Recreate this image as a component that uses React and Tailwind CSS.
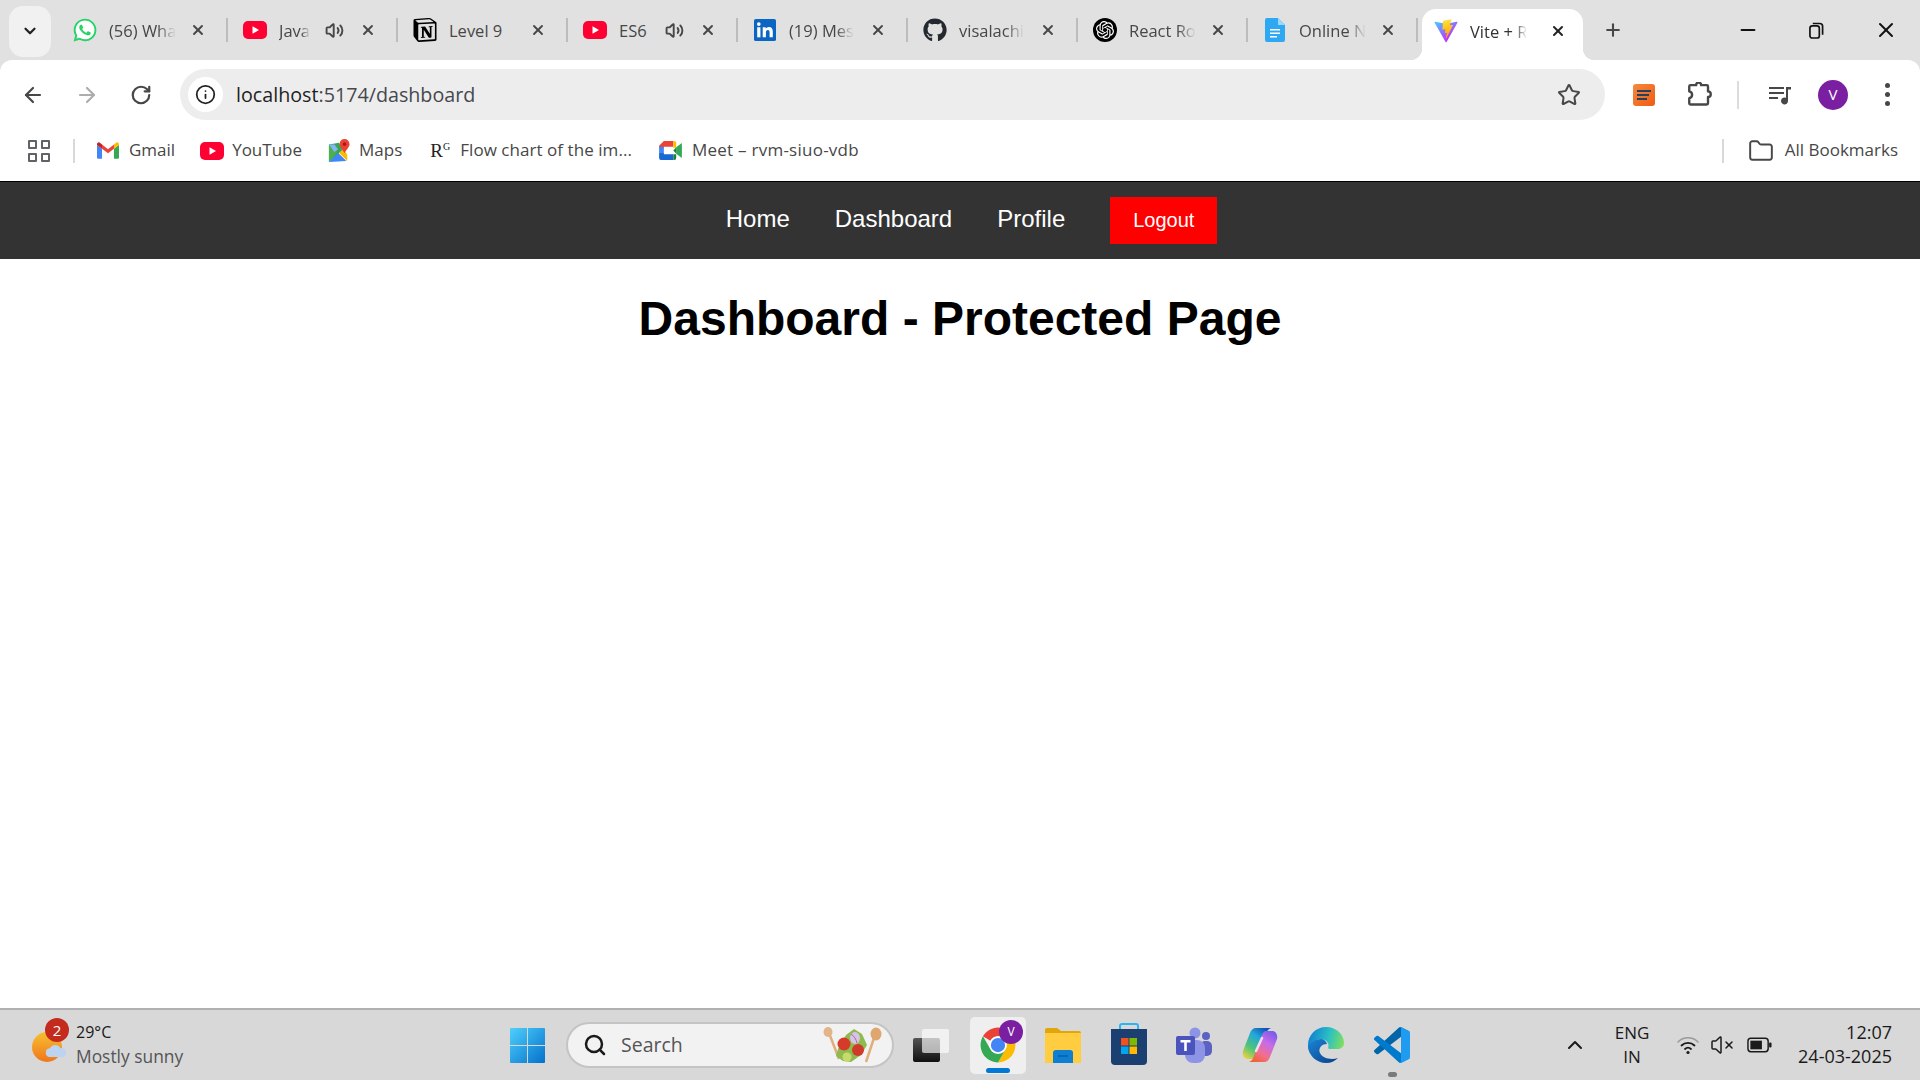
import React from 'react'
import { ArrowLeft, ArrowRight, RotateCw, Star, Plus, X, Minus, ChevronDown, ChevronUp, Search, Folder, Volume2, VolumeX, Info } from 'lucide-react'
import { FaWhatsapp, FaGithub } from 'react-icons/fa'
import { SiNotion, SiOpenai } from 'react-icons/si'

const ui = "font-['Open_Sans',sans-serif]"

const YouTubeIcon = ({ className = 'w-6 h-[18px]' }) => (
    <svg viewBox="0 0 24 18" className={className}>
        <rect width="24" height="18" rx="5" fill="#ff0033" />
        <path d="M9.5 5.2 16 9l-6.500 3.800z" fill="#fff" />
    </svg>
)

const LinkedinIcon = () => (
    <svg viewBox="0 0 24 24" className="w-[22px] h-[22px]">
        <rect width="24" height="24" rx="2" fill="#0a66c2" />
        <rect x="3.500" y="9" width="3.500" height="11" fill="#fff" />
        <circle cx="5.250" cy="5.500" r="2" fill="#fff" />
        <path d="M9.500 9h3.300v1.600c.7-1.100 1.900-1.900 3.500-1.900 3 0 4.200 1.900 4.200 5V20h-3.500v-5.500c0-1.500-.5-2.600-1.900-2.600s-2.100 1.100-2.100 2.600V20H9.500z" fill="#fff" />
    </svg>
)

const DocsIcon = () => (
    <svg viewBox="0 0 20 24" className="w-5 h-6">
        <path d="M2 0h11l7 7v15a2 2 0 0 1-2 2H2a2 2 0 0 1-2-2V2a2 2 0 0 1 2-2z" fill="#2ea8f2" />
        <path d="M13 0l7 7h-7z" fill="#9ad7fb" />
        <path d="M5 11h10v1.500H5zM5 14.500h10V16H5zM5 18h7v1.500H5z" fill="#fff" />
    </svg>
)

const ViteIcon = () => (
    <svg viewBox="0 0 410 404" className="w-6 h-6 shrink-0">
        <defs>
            <linearGradient id="viteA" x1="6" y1="33" x2="235" y2="344" gradientUnits="userSpaceOnUse">
                <stop stopColor="#41D1FF" />
                <stop offset="1" stopColor="#BD34FE" />
            </linearGradient>
            <linearGradient id="viteB" x1="194" y1="8" x2="236" y2="293" gradientUnits="userSpaceOnUse">
                <stop stopColor="#FFEA83" />
                <stop offset="0.08" stopColor="#FFDD35" />
                <stop offset="1" stopColor="#FFA800" />
            </linearGradient>
        </defs>
        <path d="M399.641 59.5246L215.643 388.545C211.844 395.338 202.084 395.378 198.228 388.618L10.5817 59.5563C6.38087 52.1896 12.6802 43.2665 21.0281 44.7586L205.223 77.6824C206.398 77.8924 207.601 77.8904 208.776 77.6763L389.119 44.8058C397.439 43.2894 403.768 52.1434 399.641 59.5246Z" fill="url(#viteA)" />
        <path d="M292.965 1.5744L156.801 28.2552C154.563 28.6937 152.906 30.5903 152.771 32.8664L144.395 174.33C144.198 177.662 147.258 180.248 150.51 179.498L188.42 170.749C191.967 169.931 195.172 173.055 194.443 176.622L183.18 231.775C182.422 235.487 185.907 238.661 189.532 237.56L212.947 230.446C216.577 229.344 220.065 232.527 219.297 236.242L201.398 322.875C200.278 328.294 207.486 331.249 210.492 326.603L212.5 323.5L323.454 102.072C325.312 98.3645 322.108 94.137 318.036 94.9228L279.014 102.454C275.347 103.161 272.227 99.746 273.262 96.1583L298.731 7.86689C299.767 4.27314 296.636 0.855181 292.965 1.5744Z" fill="url(#viteB)" />
    </svg>
)

const WhatsappIcon = () => (
    <div className="relative w-[26px] h-[26px] flex items-center justify-center">
        <span className="absolute inset-[3px] rounded-full bg-white" />
        <FaWhatsapp className="relative w-[26px] h-[26px] text-[#25d366]" />
    </div>
)

const OpenaiIcon = () => (
    <div className="w-6 h-6 rounded-full bg-black flex items-center justify-center">
        <SiOpenai className="w-[18px] h-[18px] text-white" />
    </div>
)

const tabs = [
    { icon: <WhatsappIcon />, title: '(56) Wha', fade: true },
    { icon: <YouTubeIcon />, title: 'Java', sound: true, fade: true },
    { icon: <SiNotion className="w-6 h-6 text-black" />, title: 'Level 9' },
    { icon: <YouTubeIcon />, title: 'ES6', sound: true },
    { icon: <LinkedinIcon />, title: '(19) Mes', fade: true },
    { icon: <FaGithub className="w-6 h-6 text-[#24292f]" />, title: 'visalachi', fade: true },
    { icon: <OpenaiIcon />, title: 'React Ro', fade: true },
    { icon: <DocsIcon />, title: 'Online N', fade: true },
]

const Tab = ({ tab }) => (
    <>
        <div className="w-[168px] h-[60px] flex items-center pl-[15px] pr-[20px] shrink-0">
            <div className="w-6 h-6 flex items-center justify-center shrink-0">{tab.icon}</div>
            <div className={`ml-[12px] flex-1 whitespace-nowrap text-[16.5px] text-[#474747] pt-[3px] ${ui}`}>
                <span className={tab.fade ? 'inline-block [mask-image:linear-gradient(to_right,black_72%,transparent)]' : ''}>{tab.title}</span>
            </div>
            {tab.sound && <Volume2 className="w-[19px] h-[19px] text-[#474747] mx-[8px] shrink-0" strokeWidth={2.400} />}
            <X className="w-[16px] h-[16px] text-[#474747] ml-[8px] shrink-0" strokeWidth={2.800} />
        </div>
        <div className="w-[2px] h-[24px] bg-[#bcbcbc] shrink-0" />
    </>
)

const TabStrip = () => (
    <div className="h-[60px] flex items-center bg-[#e1e1e1]">
        <div className="w-[42px] h-[51px] ml-[9px] mt-[2px] mr-[7px] rounded-[14px] bg-[#f1f1f1] flex items-center justify-center shrink-0">
            <ChevronDown className="w-[18px] h-[18px] text-[#222]" strokeWidth={3} />
        </div>
        {tabs.map((tab) => <Tab key={tab.title} tab={tab} />)}
        {/* active tab */}
        <div className="relative ml-[4px] mt-[9px] pb-[7px] w-[161px] h-[51px] bg-white rounded-t-[14px] flex items-center pl-[12px] pr-[17px] shrink-0">
            <span className="absolute -left-[12px] bottom-0 w-[12px] h-[12px] bg-[radial-gradient(circle_at_0_0,transparent_12px,white_12.500px)]" />
            <span className="absolute -right-[12px] bottom-0 w-[12px] h-[12px] bg-[radial-gradient(circle_at_100%_0,transparent_12px,white_12.500px)]" />
            <ViteIcon />
            <div className={`ml-[12px] flex-1 whitespace-nowrap text-[16.5px] text-[#333] pt-[3px] ${ui}`}>
                <span className="inline-block [mask-image:linear-gradient(to_right,black_78%,transparent)]">Vite + R</span>
            </div>
            <X className="w-[16px] h-[16px] text-[#222] shrink-0" strokeWidth={3} />
        </div>
        <Plus className="w-[20px] h-[20px] ml-[20px] text-[#474747] shrink-0" strokeWidth={2.500} />
        <div className="flex-1" />
        <Minus className="w-[22px] h-[22px] text-[#111] shrink-0" strokeWidth={2.200} />
        <svg viewBox="0 0 16 18" className="w-[15px] h-[17px] ml-[50px] text-[#111] shrink-0" fill="none" stroke="currentColor" strokeWidth="1.800">
            <rect x="1" y="4" width="10" height="13" rx="2.500" />
            <path d="M4 1.500h7.500a3 3 0 0 1 3 3v9" />
        </svg>
        <X className="w-[24px] h-[24px] ml-[50px] mr-[22px] text-[#111] shrink-0" strokeWidth={2} />
    </div>
)

const Toolbar = () => (
    <div className="h-[60px] bg-white rounded-t-[12px] flex items-center pt-[9px]">
        <ArrowLeft className="w-[24px] h-[24px] ml-[21px] text-[#474747] shrink-0" strokeWidth={2.200} />
        <ArrowRight className="w-[24px] h-[24px] ml-[30px] text-[#adadad] shrink-0" strokeWidth={2.200} />
        <RotateCw className="w-[22px] h-[22px] ml-[31px] text-[#474747] shrink-0" strokeWidth={2.400} />
        <div className="ml-[28px] w-[1425px] h-[51px] rounded-full bg-[#eeedee] flex items-center pl-[8px] pr-[24px] shrink-0">
            <div className="w-[35px] h-[35px] rounded-full bg-white flex items-center justify-center">
                <Info className="w-[21px] h-[21px] text-[#222]" strokeWidth={2} />
            </div>
            <div className={`ml-[13px] flex-1 text-[19.7px] text-[#46484c] ${ui}`}>
                <span className="text-[#1f1f1f]">localhost</span>:5174/dashboard
            </div>
            <Star className="w-[24px] h-[24px] text-[#474747]" strokeWidth={2} />
        </div>
        <svg viewBox="0 0 22 22" className="w-[22px] h-[22px] ml-[28px] shrink-0">
            <defs>
                <linearGradient id="ext" x1="0" y1="0" x2="1" y2="1">
                    <stop stopColor="#f58a3c" />
                    <stop offset="1" stopColor="#f05a14" />
                </linearGradient>
            </defs>
            <rect width="22" height="22" rx="3" fill="url(#ext)" />
            <path d="M4 7h14M4 11h12M4 15h10" stroke="#27405e" strokeWidth="1.800" />
        </svg>
        <svg viewBox="3 3 20 20" className="w-[25px] h-[25px] ml-[33px] text-[#474747] shrink-0" fill="none" stroke="currentColor" strokeWidth="1.900" strokeLinejoin="round">
            <path d="M5 5.500h4.500a2 2 0 0 1 4 0H18a1 1 0 0 1 1 1v4a2.200 2.200 0 0 1 0 4.400V20a1 1 0 0 1-1 1H5a1 1 0 0 1-1-1v-4a2.800 2.800 0 0 0 0-5.500V6.500a1 1 0 0 1 1-1z" />
        </svg>
        <div className="w-[2px] h-[28px] ml-[24px] bg-[#dcdcdc] shrink-0" />
        <svg viewBox="0 0 24 24" className="w-[24px] h-[24px] ml-[29px] text-[#474747] shrink-0" fill="currentColor">
            <path d="M1 4h15v2H1zM1 9h15v2H1zM1 14h9v2H1z" />
            <path d="M18 4h5v2.500h-3V18a3.500 3.500 0 1 1-2-3.200z" />
        </svg>
        <div className={`w-[30px] h-[30px] ml-[26px] rounded-full bg-[#7b1fa2] text-white text-[15px] flex items-center justify-center shrink-0 ${ui}`}>V</div>
        <div className="ml-[37px] flex flex-col gap-[4px] shrink-0">
            <span className="w-[5px] h-[5px] rounded-full bg-[#474747]" />
            <span className="w-[5px] h-[5px] rounded-full bg-[#474747]" />
            <span className="w-[5px] h-[5px] rounded-full bg-[#474747]" />
        </div>
    </div>
)

const GmailIcon = () => (
    <svg viewBox="0 0 24 18" className="w-[22px] h-[17px] shrink-0">
        <path d="M1.500 18A1.500 1.500 0 0 1 0 16.500V3l5.500 4v11z" fill="#4285f4" />
        <path d="M18.500 18V7L24 3v13.500a1.500 1.500 0 0 1-1.500 1.500z" fill="#34a853" />
        <path d="M18.500 2.500V7L24 3V2a2 2 0 0 0-3.200-1.500z" fill="#fbbc04" />
        <path d="M5.500 7V2.500L12 7.500l6.500-5V7L12 12z" fill="#ea4335" />
        <path d="M0 3V2A2 2 0 0 1 3.200.5l2.300 2V7z" fill="#c5221f" />
    </svg>
)

const MapsIcon = () => (
    <svg viewBox="0 0 24 26" className="w-[22px] h-[24px] shrink-0">
        <path d="M1 6l11-2 4 8L1 25z" fill="#34a853" />
        <path d="M1 6l9 8L1 25z" fill="#4caf50" />
        <path d="M1 25l10-10 9 9z" fill="#4285f4" />
        <path d="M1 6l6 0 4 5-4 3z" fill="#8ab4f8" />
        <path d="M12 15l5-4 4 6v7z" fill="#fbbc04" />
        <path d="M18 0a5.500 5.500 0 0 1 5.500 5.500c0 3.500-4 6-5.500 10-1.500-4-5.500-6.500-5.500-10A5.500 5.500 0 0 1 18 0z" fill="#ea4335" />
        <circle cx="18" cy="5.500" r="2" fill="#a61b13" />
    </svg>
)

const MeetIcon = () => (
    <svg viewBox="0 0 24 20" className="w-[23px] h-[19px] shrink-0">
        <path d="M5 0h10v6H5v1H0V5z" fill="#ea4335" />
        <path d="M0 6h5v8H0z" fill="#4285f4" />
        <path d="M0 13h5v1h10v6H2a2 2 0 0 1-2-2z" fill="#1967d2" />
        <path d="M15 0v7h3V2a2 2 0 0 0-2-2z" fill="#fbbc04" />
        <path d="M15 14h3v4a2 2 0 0 1-2 2h-1z" fill="#188038" />
        <path d="M18 6.500 24 2v16l-6-4.500z" fill="#34a853" />
        <path d="M15 10l3-3.500v7z" fill="#188038" />
    </svg>
)

const BookmarkText = ({ children, className = '' }) => (
    <span className={`text-[17px] text-[#474747] whitespace-nowrap -mt-[2px] ${ui} ${className}`}>{children}</span>
)

const BookmarksBar = () => (
    <div className="h-[61px] bg-white flex items-center">
        <div className="ml-[28px] grid grid-cols-2 gap-[4px] shrink-0">
            {[0, 1, 2, 3].map((i) => <span key={i} className="w-[9px] h-[9px] border-2 border-[#5f6368] rounded-[1px]" />)}
        </div>
        <div className="w-[2px] h-[24px] ml-[23px] bg-[#d9d9d9] shrink-0" />
        <div className="ml-[22px] flex items-center"><GmailIcon /><BookmarkText className="ml-[10px]">Gmail</BookmarkText></div>
        <div className="ml-[25px] flex items-center"><YouTubeIcon /><BookmarkText className="ml-[8px]">YouTube</BookmarkText></div>
        <div className="ml-[26px] flex items-center"><MapsIcon /><BookmarkText className="ml-[9px]">Maps</BookmarkText></div>
        <div className="ml-[28px] flex items-center">
            <span className="text-[19px] text-[#222] font-['Liberation_Serif',serif] leading-none">R<sup className="text-[10px] -top-[7px] relative">G</sup></span>
            <BookmarkText className="ml-[10px] tracking-[0.05px]">Flow chart of the im...</BookmarkText>
        </div>
        <div className="ml-[27px] flex items-center"><MeetIcon /><BookmarkText className="ml-[10px] tracking-[0.25px]">Meet – rvm-siuo-vdb</BookmarkText></div>
        <div className="flex-1" />
        <div className="w-[2px] h-[24px] bg-[#d9d9d9] shrink-0" />
        <Folder className="w-[26px] h-[26px] ml-[24px] text-[#474747] shrink-0" strokeWidth={1.800} />
        <BookmarkText className="ml-[11px] mr-[22px]">All Bookmarks</BookmarkText>
    </div>
)

const NavBar = () => (
    <nav className="h-[78px] bg-[#333333] border-t border-black flex items-center justify-center pl-[23px] font-['Liberation_Sans',Arial,sans-serif] text-white">
        <a className="text-[24px] -mt-[4px]">Home</a>
        <a className="text-[24px] -mt-[4px] ml-[45px]">Dashboard</a>
        <a className="text-[24px] -mt-[4px] ml-[45px]">Profile</a>
        <button className="ml-[45px] w-[107px] h-[47px] pb-[2px] bg-[#ff0000] text-white text-[20px]">Logout</button>
    </nav>
)

const WeatherIcon = () => (
    <div className="relative w-[36px] h-[36px] shrink-0">
        <svg viewBox="0 0 36 36" className="w-[36px] h-[36px]">
            <defs>
                <linearGradient id="sun" x1="0" y1="0" x2="0" y2="1">
                    <stop stopColor="#f7c02f" />
                    <stop offset="1" stopColor="#f0761c" />
                </linearGradient>
            </defs>
            <circle cx="17" cy="18" r="15" fill="url(#sun)" />
            <path d="M19 28a4.500 4.500 0 0 1 1-8.800 6 6 0 0 1 10.500 0A4.500 4.500 0 0 1 33 28z" fill="#bcd3f2" />
        </svg>
        <span className="absolute left-[15px] -top-[11px] w-[24px] h-[24px] rounded-full bg-[#c42b1c] text-white text-[15px] flex items-center justify-center">2</span>
    </div>
)

const WindowsIcon = () => (
    <svg viewBox="0 0 36 36" className="w-[35px] h-[35px] shrink-0">
        <defs>
            <linearGradient id="win" x1="0" y1="0" x2="1" y2="1">
                <stop stopColor="#4fd0fc" />
                <stop offset="1" stopColor="#0470cc" />
            </linearGradient>
        </defs>
        <path d="M1 0h16.500v17.500H0V1a1 1 0 0 1 1-1zM18.500 0H35a1 1 0 0 1 1 1v16.500H18.500zM0 18.500h17.500V36H1a1 1 0 0 1-1-1zM18.500 18.500H36V35a1 1 0 0 1-1 1H18.500z" fill="url(#win)" />
    </svg>
)

const SaladIcon = () => (
    <svg viewBox="0 0 60 36" className="w-[60px] h-[36px] shrink-0">
        <path d="M7 6l10 26" stroke="#dfae7c" strokeWidth="2.500" />
        <ellipse cx="6" cy="5" rx="4.500" ry="5" fill="#e3b487" />
        <path d="M53 8 44 35" stroke="#dfae7c" strokeWidth="2.500" />
        <ellipse cx="54" cy="7" rx="5.500" ry="6.500" fill="#e0a66f" />
        <path d="M16 22 24 8l8-6 8 5 5 11-6 10-10 7-8-1-7-5z" fill="#8dbb4e" />
        <circle cx="22" cy="17" r="6.500" fill="#d63a2a" />
        <circle cx="36" cy="23" r="6" fill="#cf3a2a" />
        <ellipse cx="33" cy="11" rx="5" ry="6" fill="#d9c3e2" />
        <path d="M29 7c3 2 5 5 6 9" stroke="#a06bb5" fill="none" />
        <circle cx="25" cy="30" r="4.500" fill="#c6db6b" />
    </svg>
)

const TaskViewIcon = () => (
    <div className="relative w-[36px] h-[33px] shrink-0">
        <div className="absolute left-0 bottom-0 w-[27px] h-[24px] rounded-[2px] bg-gradient-to-b from-[#555] to-[#111]" />
        <div className="absolute right-0 top-0 w-[27px] h-[24px] rounded-[2px] bg-white/65" />
    </div>
)

const ChromeIcon = () => (
    <svg viewBox="0 0 48 48" className="w-[38px] h-[38px]">
        <path d="M4.950 13A22 22 0 0 1 43.050 13H24A11 11 0 0 0 14.470 18.500Z" fill="#ea4335" />
        <path d="M43.050 13A22 22 0 0 1 24 46L33.530 29.500A11 11 0 0 0 24 13Z" fill="#fbbc04" />
        <path d="M24 46A22 22 0 0 1 4.950 13L14.470 29.500A11 11 0 0 0 33.530 29.500Z" fill="#34a853" />
        <circle cx="24" cy="24" r="11" fill="#fff" />
        <circle cx="24" cy="24" r="9" fill="#4285f4" />
    </svg>
)

const ExplorerIcon = () => (
    <svg viewBox="0 0 36 36" className="w-[36px] h-[36px] shrink-0">
        <path d="M0 3a2 2 0 0 1 2-2h10l4 3h18a2 2 0 0 1 2 2v4H0z" fill="#e2a50b" />
        <path d="M0 6h36v30H0z" fill="#ffcd3f" />
        <path d="M8 36V26a3 3 0 0 1 3-3h14a3 3 0 0 1 3 3v10z" fill="#0f7fd1" />
        <path d="M13 29h10" stroke="#0b5ea3" strokeWidth="1.500" />
    </svg>
)

const StoreIcon = () => (
    <svg viewBox="0 0 36 42" className="w-[36px] h-[42px] -mt-[2px] shrink-0">
        <path d="M9 7V3a2 2 0 0 1 2-2h14a2 2 0 0 1 2 2v4" fill="none" stroke="#29b6f0" strokeWidth="2" />
        <path d="M0 6h36v32a4 4 0 0 1-4 4H4a4 4 0 0 1-4-4z" fill="#1a3f70" />
        <rect x="10" y="15" width="7.500" height="7.500" fill="#f25022" />
        <rect x="18.500" y="15" width="7.500" height="7.500" fill="#7fba00" />
        <rect x="10" y="23.500" width="7.500" height="7.500" fill="#00a4ef" />
        <rect x="18.500" y="23.500" width="7.500" height="7.500" fill="#ffb900" />
    </svg>
)

const TeamsIcon = () => (
    <svg viewBox="0 0 36 36" className="w-[36px] h-[36px] shrink-0">
        <circle cx="30" cy="9" r="4" fill="#5b62c4" />
        <rect x="24" y="14" width="12" height="15" rx="5" fill="#5b62c4" />
        <circle cx="19" cy="6" r="5.500" fill="#8d94e6" />
        <rect x="9" y="13" width="20" height="23" rx="8" fill="#8d94e6" />
        <rect x="0" y="9" width="19" height="19" rx="2" fill="#4b53bc" />
        <path d="M4.500 13h10v2.500h-3.700V24H8.200v-8.500H4.500z" fill="#fff" />
    </svg>
)

const CopilotIcon = () => (
    <svg viewBox="0 0 36 36" className="w-[36px] h-[36px] shrink-0">
        <defs>
            <linearGradient id="copA" x1="0.75" y1="0" x2="0.1" y2="1">
                <stop stopColor="#0f55b5" />
                <stop offset="0.3" stopColor="#23a7dc" />
                <stop offset="0.65" stopColor="#4cc47a" />
                <stop offset="1" stopColor="#f4d23c" />
            </linearGradient>
            <linearGradient id="copB" x1="0.8" y1="0" x2="0.2" y2="1">
                <stop stopColor="#7a5ce8" />
                <stop offset="0.35" stopColor="#c66bea" />
                <stop offset="0.7" stopColor="#f26f8e" />
                <stop offset="1" stopColor="#f0622c" />
            </linearGradient>
        </defs>
        <path d="M14 1C11 1 9 3 8 6L1 24C0 28 2 32 6 32H12C14 32 15 30 16 28L24 7C25 4 26 2 29 1Z" fill="url(#copA)" />
        <path d="M22 35C25 35 27 33 28 30L35 12C36 8 34 4 30 4H24C22 4 21 6 20 8L12 29C11 32 10 34 7 35Z" fill="url(#copB)" />
        <path d="M14 24 20 11" stroke="#fff" strokeOpacity="0.75" strokeWidth="2.500" strokeLinecap="round" />
    </svg>
)

const EdgeIcon = () => (
    <svg viewBox="0 0 36 36" className="w-[36px] h-[36px] shrink-0">
        <defs>
            <linearGradient id="edgeA" x1="0" y1="0.4" x2="1" y2="0.6">
                <stop stopColor="#0f7fd1" />
                <stop offset="0.55" stopColor="#2cc0c4" />
                <stop offset="1" stopColor="#7fe05c" />
            </linearGradient>
            <linearGradient id="edgeB" x1="0" y1="0" x2="1" y2="1">
                <stop stopColor="#1a86d6" />
                <stop offset="1" stopColor="#0b3f8a" />
            </linearGradient>
        </defs>
        <path d="M18 0C29 0 36 8 36 16 36 20 33 22 29 22H22C20 22 20 21 20.500 19 21 16 18 12 13 12 8 12 3 16 2 26 .5 23 0 20 0 18 0 8 8 0 18 0Z" fill="url(#edgeA)" />
        <path d="M13 12C7 12 0 17 0 20 1 29 9 36 18 36 23 36 27 34 30 31 24 33 15 32 12 26 10 22 13 17 19 17 18 14 16 12 13 12Z" fill="url(#edgeB)" />
    </svg>
)

const VsCodeIcon = () => (
    <svg viewBox="0 0 100 100" className="w-[36px] h-[36px] shrink-0">
        <path d="M96.500 10.800 75.900.9a6.200 6.200 0 0 0-7.100 1.200L1.300 63.600a4.200 4.200 0 0 0 0 6.200l5.500 5a4.200 4.200 0 0 0 5.300.2L93.400 13.400a4.100 4.100 0 0 1 6.600 3.300v-.2a6.200 6.200 0 0 0-3.500-5.700z" fill="#0065a9" />
        <path d="M96.500 89.200 75.900 99.100a6.200 6.200 0 0 1-7.100-1.200L1.300 36.400a4.200 4.200 0 0 1 0-6.200l5.500-5a4.200 4.200 0 0 1 5.300-.2L93.400 86.600a4.100 4.100 0 0 0 6.600-3.300v.2a6.200 6.200 0 0 1-3.500 5.700z" fill="#007acc" />
        <path d="M75.900 99.100a6.200 6.200 0 0 1-7.100-1.200c2.300 2.300 6.200.7 6.200-2.600V4.700c0-3.300-3.900-4.900-6.200-2.600a6.200 6.200 0 0 1 7.100-1.200l20.600 9.900a6.200 6.200 0 0 1 3.500 5.600v67.200a6.200 6.200 0 0 1-3.500 5.600z" fill="#1f9cf0" />
    </svg>
)

const WifiIcon = () => (
    <svg viewBox="0 0 24 20" className="w-[24px] h-[20px] ml-[24px] shrink-0" fill="none" strokeLinecap="round">
        <path d="M2 7a14 14 0 0 1 20 0" stroke="#9a9a9a" strokeWidth="1.500" />
        <path d="M5.500 10.500a9.500 9.500 0 0 1 13 0" stroke="#1a1a1a" strokeWidth="1.800" />
        <path d="M9 14a4.500 4.500 0 0 1 6 0" stroke="#1a1a1a" strokeWidth="1.800" />
        <circle cx="12" cy="17.500" r="1.600" fill="#1a1a1a" />
    </svg>
)

const Taskbar = () => (
    <div className={`h-[72px] bg-[#d8d8d8] border-t-2 border-[#b0b0b0] flex items-center shrink-0 ${ui}`}>
        <div className="ml-[30px] w-[36px] mt-[4px]"><WeatherIcon /></div>
        <div className="ml-[10px] w-[200px] shrink-0 -mt-[3px]">
            <div className="text-[16px] leading-[24px] text-[#1a1a1a]">29°C</div>
            <div className="text-[17.4px] leading-[24px] text-[#555]">Mostly sunny</div>
        </div>
        <div className="ml-[234px]"><WindowsIcon /></div>
        <div className="ml-[21px] w-[328px] h-[46px] -mt-[1px] rounded-full bg-[#f2f2f2] border-2 border-[#c4c4c4] flex items-center pl-[15px] pr-[10px] shrink-0">
            <Search className="w-[24px] h-[24px] text-[#1a1a1a]" strokeWidth={2.500} />
            <span className="ml-[14px] flex-1 text-[19.5px] text-[#555]">Search</span>
            <SaladIcon />
        </div>
        <div className="ml-[19px]"><TaskViewIcon /></div>
        <div className="relative ml-[21px] w-[56px] h-[57px] rounded-[5px] bg-[#efefef] flex items-center justify-center shrink-0">
            <ChromeIcon />
            <span className="absolute right-[3px] top-[3px] w-[24px] h-[24px] rounded-full bg-[#7b1fa2] text-white text-[12px] flex items-center justify-center">V</span>
            <span className="absolute bottom-[1px] left-[16px] w-[24px] h-[5px] rounded-full bg-[#0078d4]" />
        </div>
        <div className="ml-[19px]"><ExplorerIcon /></div>
        <div className="ml-[30px]"><StoreIcon /></div>
        <div className="ml-[29px]"><TeamsIcon /></div>
        <div className="ml-[30px]"><CopilotIcon /></div>
        <div className="ml-[30px]"><EdgeIcon /></div>
        <div className="relative ml-[30px]">
            <VsCodeIcon />
            <span className="absolute left-[14px] -bottom-[14px] w-[9px] h-[5px] rounded-full bg-[#7a7a7a]" />
        </div>
        <ChevronUp className="w-[24px] h-[24px] ml-[153px] text-[#1a1a1a] shrink-0" strokeWidth={2} />
        <div className="ml-[25px] w-[40px] text-center text-[17px] leading-[24px] text-[#1a1a1a] shrink-0">ENG<br />IN</div>
        <WifiIcon />
        <VolumeX className="w-[24px] h-[24px] ml-[10px] text-[#1a1a1a] shrink-0" strokeWidth={1.500} />
        <svg viewBox="0 0 26 16" className="w-[25px] h-[16px] ml-[13px] shrink-0">
            <rect x="1" y="1" width="21" height="14" rx="3" fill="none" stroke="#1a1a1a" strokeWidth="1.500" />
            <rect x="3.500" y="3.500" width="12" height="9" fill="#1a1a1a" />
            <rect x="23" y="5.500" width="2.500" height="5" rx="1" fill="#1a1a1a" />
        </svg>
        <div className="flex-1 text-right mr-[28px] -mt-[3px] text-[18px] leading-[24px] text-[#1a1a1a]">
            <div>12:07</div>
            <div>24-03-2025</div>
        </div>
    </div>
)

const App = () => {
    return (
        <div className="w-[1920px] h-[1080px] flex flex-col overflow-hidden bg-white">
            <div className="bg-[#e1e1e1] shrink-0">
                <TabStrip />
                <Toolbar />
            </div>
            <BookmarksBar />
            <NavBar />
            <main className="flex-1 bg-white">
                <h1 className="mt-[32px] text-center text-[48px] leading-[55px] font-bold text-black font-['Liberation_Sans',Arial,sans-serif]">
                    Dashboard - Protected Page
                </h1>
            </main>
            <Taskbar />
        </div>
    )
}

export default App
